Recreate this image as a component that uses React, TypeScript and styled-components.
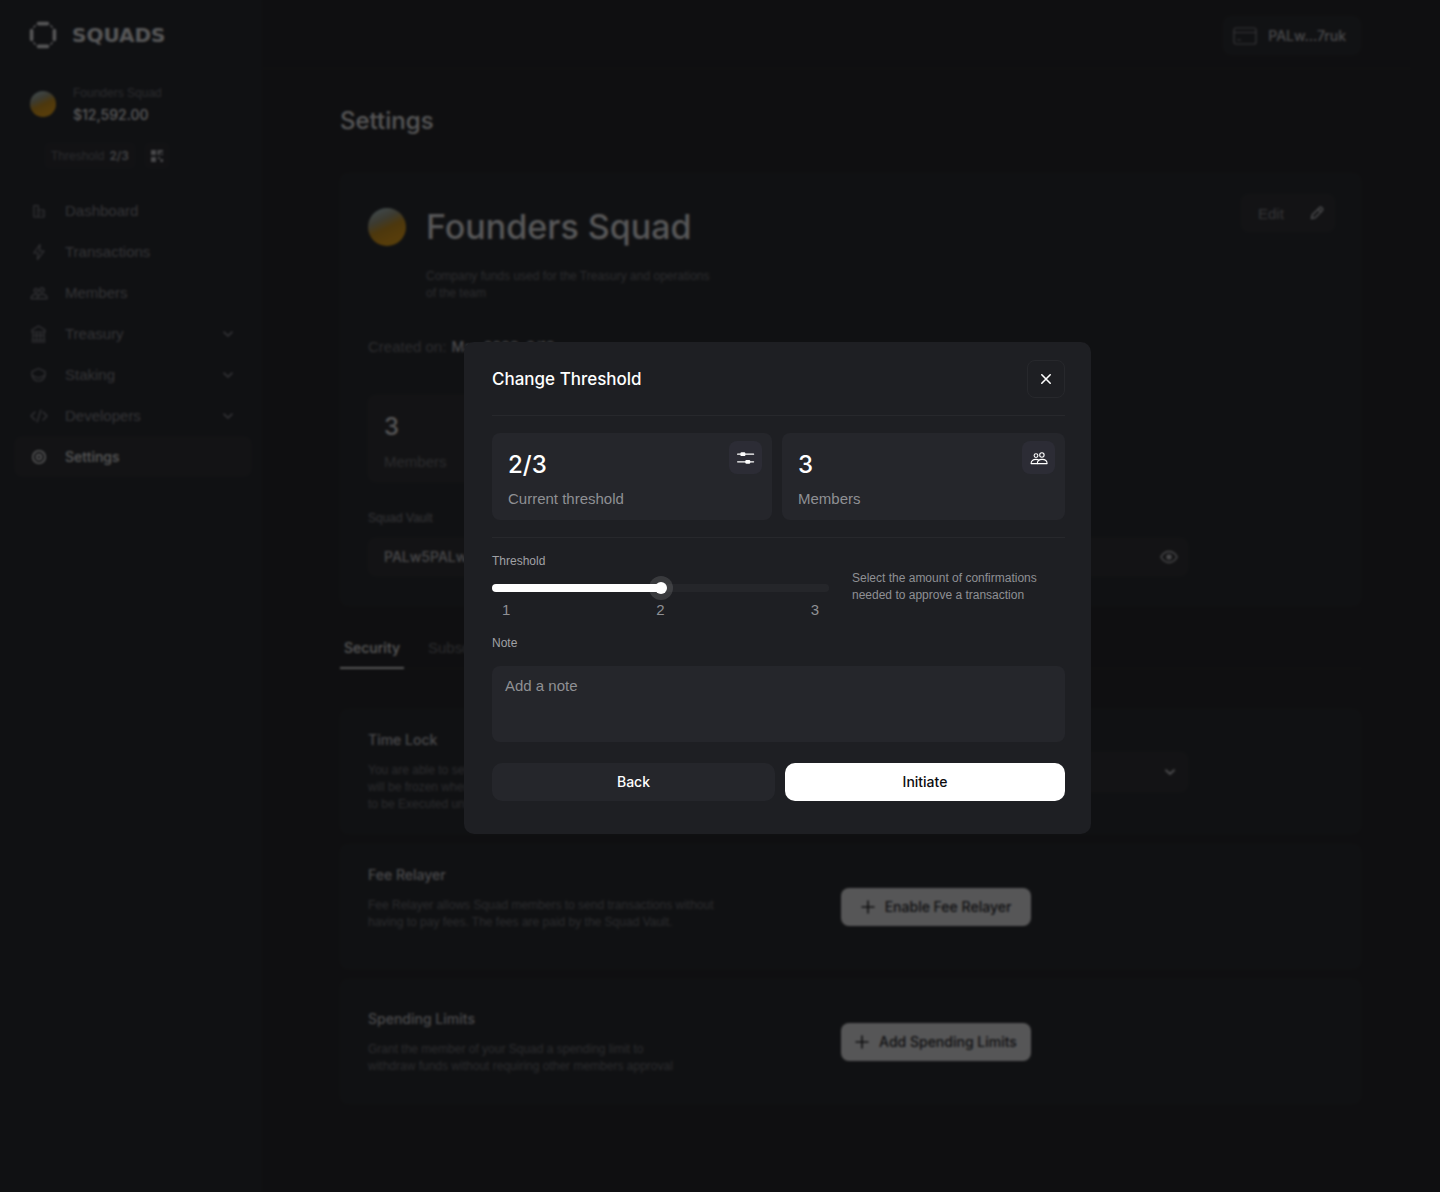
import React, { useState } from "react";
import styled, { createGlobalStyle, css } from "styled-components";

const color = {
  page: "#131315",
  sidebar: "#15181c",
  card: "#171a1d",
  field: "#212123",
  line: "#18191b",
  text: "#ffffff",
  soft: "#d0d0d4",
  nav: "#8c8c92",
  faint: "#6e6f74",
  modal: "#1e1f23",
  modalCard: "#25262b",
  modalLine: "#27282c",
  modalText: "#8f9094",
};

const medium = css`
  font-family: Inter, "Liberation Sans", Arial, sans-serif;
  font-weight: 500;
`;

const Global = createGlobalStyle`
  *, *::before, *::after { box-sizing: border-box; }
  body { margin: 0; background: ${color.page}; }
  body, button, input, textarea, select {
    font-family: "Liberation Sans", Arial, Helvetica, sans-serif;
  }
  h1, h2, h3, p, ul, dl, dd { margin: 0; padding: 0; font-weight: 400; }
  button { border: 0; padding: 0; cursor: pointer; }
  svg { display: block; flex: none; }
`;

/* ---------- Shell ---------- */

const Shell = styled.div`
  display: grid;
  grid-template-columns: 262px minmax(0, 1fr);
  min-height: 100vh;
  color: ${color.text};
  font-size: 15px;
  line-height: 20px;
`;

const Sidebar = styled.aside`
  background: ${color.sidebar};
  padding: 21px 10px 0 14px;
`;

const Brand = styled.a`
  display: flex;
  align-items: center;
  gap: 15px;
  height: 28px;
  padding-left: 15px;
  color: ${color.text};
  text-decoration: none;
  font: 700 20px/28px "DejaVu Sans", Verdana, sans-serif;
`;

const Account = styled.div`
  display: flex;
  align-items: center;
  gap: 17px;
  margin-top: 33px;
  padding-left: 16px;
`;

const Avatar = styled.span<{ $size: number }>`
  flex: none;
  width: ${(p) => p.$size}px;
  height: ${(p) => p.$size}px;
  border-radius: 50%;
  background: linear-gradient(155deg, #b4d4dc 8%, #a8a480 32%, #e09a08 52%, #ffa800 75%, #ffb400 100%);
`;

const AccountName = styled.p`
  font-size: 12px;
  line-height: 22px;
  color: ${color.faint};
`;

const Balance = styled.p`
  ${medium}
  font-size: 14px;
  line-height: 22px;
`;

const Tags = styled.div`
  display: flex;
  gap: 8px;
  margin-top: 16px;
  padding-left: 30px;
`;

const Tag = styled.span`
  display: flex;
  align-items: center;
  gap: 5px;
  height: 27px;
  padding: 0 7px;
  border-radius: 6px;
  background: #1b1c20;
  color: ${color.faint};
  font-size: 12px;
  b { ${medium} color: ${color.soft}; font-size: 12px; }
`;

const TagButton = styled.button`
  display: grid;
  place-items: center;
  width: 26px;
  height: 27px;
  border-radius: 6px;
  background: #1b1c20;
  color: ${color.soft};
`;

const NavList = styled.ul`
  list-style: none;
  margin-top: 21px;
`;

const NavLink = styled.a<{ $active?: boolean }>`
  display: flex;
  align-items: center;
  gap: 17px;
  height: 41px;
  padding: 0 18px 0 16px;
  border-radius: 8px;
  color: ${color.nav};
  text-decoration: none;
  span { flex: 1; }
  ${(p) => p.$active && css`
    ${medium}
    font-size: 14px;
    background: #1e1f22;
    color: ${color.text};
  `}
`;

/* ---------- Main column ---------- */

const TopBar = styled.header`
  display: flex;
  justify-content: flex-end;
  align-items: flex-start;
  height: 69px;
  margin-right: 30px;
  padding: 16px 49px 0 0;
  border-bottom: 1px solid ${color.line};
`;

const Wallet = styled.button`
  ${medium}
  display: flex;
  align-items: center;
  gap: 11px;
  height: 39px;
  padding: 0 15px 0 10px;
  border-radius: 8px;
  background: #1a1c1f;
  color: ${color.nav};
  font-size: 14px;
  span { color: ${color.soft}; }
`;

const Content = styled.main`
  padding: 36px 79px 88px 78px;
`;

const PageTitle = styled.h1`
  ${medium}
  font-size: 24px;
  line-height: 32px;
`;

const Profile = styled.section`
  margin-top: 36px;
  padding: 21px 26px 30px 28px;
  border-radius: 8px;
  background: ${color.card};
`;

const ProfileTop = styled.div`
  display: flex;
  align-items: flex-start;
  justify-content: space-between;
`;

const Identity = styled.div`
  display: grid;
  grid-template-columns: 38px auto;
  column-gap: 20px;
  row-gap: 18px;
  align-items: center;
  padding-top: 10px;
`;

const SquadName = styled.h2`
  ${medium}
  font-size: 34px;
  line-height: 46px;
`;

const Muted = styled.p<{ $lines?: number }>`
  font-size: 12px;
  line-height: 17px;
  min-height: ${(p) => (p.$lines ?? 1) * 17}px;
  color: ${color.faint};
`;

const SquadAbout = styled(Muted)`
  grid-column: 2;
`;

const EditButton = styled.button`
  display: flex;
  align-items: center;
  justify-content: space-between;
  width: 94px;
  height: 38px;
  padding: 0 10px 0 17px;
  border-radius: 8px;
  background: #1f2023;
  color: ${color.nav};
  font-size: 15px;
  svg { color: ${color.soft}; }
`;

const Created = styled.p`
  display: flex;
  gap: 5px;
  margin-top: 35px;
  color: ${color.faint};
  b { ${medium} color: ${color.soft}; font-size: 14px; }
`;

const ProfileStat = styled.dl`
  display: flex;
  flex-direction: column-reverse;
  justify-content: flex-end;
  gap: 9px;
  max-width: 404px;
  height: 87px;
  margin-top: 38px;
  padding: 16px;
  border-radius: 8px;
  background: ${color.field};
  dt { color: ${color.faint}; line-height: 20px; }
  dd { ${medium} font-size: 24px; line-height: 32px; }
`;

const VaultLabel = styled.p`
  margin-top: 27px;
  font-size: 12px;
  line-height: 18px;
  color: ${color.nav};
`;

const VaultRow = styled.div`
  ${medium}
  display: flex;
  align-items: center;
  justify-content: space-between;
  max-width: 820px;
  height: 38px;
  margin-top: 11px;
  padding: 0 10px 0 16px;
  border-radius: 8px;
  background: ${color.field};
  color: ${color.soft};
  font-size: 14px;
`;

const IconButton = styled.button`
  background: none;
  color: inherit;
`;

const Tabs = styled.div`
  display: flex;
  gap: 20px;
  margin-top: 32px;
  border-bottom: 1px solid ${color.line};
`;

const Tab = styled.button<{ $active?: boolean }>`
  height: 31px;
  padding: 0 4px 10px;
  margin-bottom: -1px;
  background: none;
  font-size: 15px;
  line-height: 20px;
  color: ${color.faint};
  border-bottom: 2px solid transparent;
  ${(p) => p.$active && css`
    ${medium}
    font-size: 14px;
    color: ${color.text};
    border-color: ${color.text};
  `}
`;

const Policies = styled.div`
  display: grid;
  gap: 10px;
  margin-top: 40px;
`;

const Policy = styled.section`
  display: grid;
  grid-template-columns: minmax(0, 473px) minmax(0, 347px);
  align-items: center;
  min-height: 125px;
  padding: 0 28px;
  border-radius: 8px;
  background: ${color.card};
`;

const PolicyTitle = styled.h3`
  ${medium}
  margin-bottom: 12px;
  font-size: 14px;
  line-height: 20px;
  color: ${color.soft};
`;

const LightButton = styled.button`
  ${medium}
  display: flex;
  align-items: center;
  justify-content: center;
  gap: 10px;
  width: 190px;
  height: 38px;
  border-radius: 8px;
  background: #ffffff;
  color: #111113;
  font-size: 14px;
`;

const SelectWrap = styled.label`
  display: flex;
  align-items: center;
  height: 40px;
  padding-right: 12px;
  border-radius: 8px;
  background: ${color.field};
  color: ${color.soft};
`;

const Select = styled.select`
  flex: 1;
  appearance: none;
  height: 100%;
  padding-left: 16px;
  border: 0;
  background: transparent;
  color: inherit;
  font-size: 15px;
`;

/* ---------- Dialog ---------- */

const Overlay = styled.div`
  position: fixed;
  inset: 0;
  display: flex;
  align-items: center;
  justify-content: center;
  padding: 0 0 16px 115px;
  background: rgba(14, 14, 15, 0.7);
  backdrop-filter: blur(1px);
`;

const Dialog = styled.div`
  width: 627px;
  padding: 18px 26px 33px 28px;
  border-radius: 10px;
  background: ${color.modal};
  color: ${color.text};
  font-size: 15px;
  line-height: 20px;
`;

const DialogHead = styled.div`
  display: flex;
  align-items: center;
  justify-content: space-between;
`;

const DialogTitle = styled.h2`
  ${medium}
  font-size: 17px;
  line-height: 24px;
`;

const CloseButton = styled.button`
  display: grid;
  place-items: center;
  width: 38px;
  height: 38px;
  border: 1px solid ${color.modalLine};
  border-radius: 8px;
  background: transparent;
  color: ${color.text};
`;

const Divider = styled.hr`
  height: 1px;
  margin: 17px 0;
  border: 0;
  background: ${color.modalLine};
`;

const Stats = styled.div`
  display: grid;
  grid-template-columns: 280fr 283fr;
  gap: 10px;
`;

const Stat = styled.div`
  display: flex;
  align-items: flex-start;
  justify-content: space-between;
  height: 87px;
  padding: 8px 10px 0 16px;
  border-radius: 8px;
  background: ${color.modalCard};
`;

const StatText = styled.dl`
  display: flex;
  flex-direction: column-reverse;
  gap: 8px;
  padding-top: 8px;
  dt { color: ${color.modalText}; }
  dd { ${medium} font-size: 24px; line-height: 32px; }
`;

const StatIcon = styled.span`
  display: grid;
  place-items: center;
  width: 33px;
  height: 33px;
  border-radius: 8px;
  background: #2c2c35;
`;

const ThresholdRow = styled.div`
  display: grid;
  grid-template-columns: 337px 1fr;
  column-gap: 23px;
  margin-top: -2px;
`;

const FieldLabel = styled.label`
  display: block;
  font-size: 12px;
  line-height: 16px;
  color: #a0a1a5;
`;

const Slider = styled.input`
  display: block;
  appearance: none;
  width: 100%;
  height: 24px;
  margin: 7px 0 0;
  background: transparent;
  outline: none;
  &::-webkit-slider-runnable-track {
    height: 8px;
    border-radius: 4px;
    background: linear-gradient(to right, #ffffff var(--fill), #25262a var(--fill));
  }
  &::-webkit-slider-thumb {
    appearance: none;
    width: 12px;
    height: 12px;
    margin-top: -2px;
    border-radius: 50%;
    background: #ffffff;
    box-shadow: 0 0 0 6px rgba(255, 255, 255, 0.12);
  }
`;

const Ticks = styled.div`
  display: flex;
  justify-content: space-between;
  padding: 0 10px;
  color: ${color.modalText};
`;

const Hint = styled.p`
  padding-top: 17px;
  font-size: 12px;
  line-height: 17px;
  color: ${color.modalText};
`;

const NoteLabel = styled(FieldLabel)`
  margin-top: 15px;
`;

const Note = styled.textarea`
  display: block;
  width: 100%;
  height: 76px;
  margin-top: 15px;
  padding: 10px 13px;
  border: 0;
  border-radius: 8px;
  resize: none;
  outline: none;
  background: ${color.modalCard};
  color: ${color.text};
  font-size: 15px;
  line-height: 20px;
  &::placeholder { color: ${color.modalText}; }
`;

const Actions = styled.div`
  display: grid;
  grid-template-columns: 283fr 280fr;
  gap: 10px;
  margin-top: 21px;
`;

const ActionButton = styled.button<{ $primary?: boolean }>`
  ${medium}
  height: 38px;
  padding-bottom: 2px;
  border-radius: 10px;
  font-size: 14px;
  background: ${(p) => (p.$primary ? "#ffffff" : color.modalCard)};
  color: ${(p) => (p.$primary ? "#0c0c0e" : "#ffffff")};
`;

/* ---------- Icons ---------- */

type IconProps = { w: number; h?: number; sw?: number; children: React.ReactNode };

const Icon = ({ w, h = w, sw = 1.2, children }: IconProps) => (
  <svg
    width={w}
    height={h}
    viewBox={`0 0 ${w} ${h}`}
    fill="none"
    stroke="currentColor"
    strokeWidth={sw}
    strokeLinecap="round"
    strokeLinejoin="round"
    aria-hidden="true"
  >
    {children}
  </svg>
);

const LogoIcon = () => (
  <Icon w={28} sw={3.6}>
    <path d="M9.500 2.600h9M9.500 25.400h9M2.600 9.500v9M25.400 9.500v9" />
    <path d="M4.500 6.500l2-2M21.500 4.500l2 2M4.500 21.500l2 2M21.500 23.500l2-2" strokeWidth={1.2} />
  </Icon>
);

const Chevron = ({ sw = 1.6 }: { sw?: number }) => (
  <Icon w={12} sw={sw}><path d="M2 4.200l4 3.800 4-3.800" /></Icon>
);

const PlusIcon = () => (
  <Icon w={14} sw={1.6}><path d="M7 1v12M1 7h12" /></Icon>
);

const PeopleShape = () => (
  <>
    <circle cx="6" cy="4.600" r="1.900" />
    <circle cx="11.900" cy="4" r="2.200" />
    <path d="M7.300 12.600c0-2.800 1.900-4.200 4.900-4.200s4.900 1.400 4.900 4.200z" />
    <path d="M8.600 9C7.800 8.500 7 8.400 6 8.400c-2.900 0-4.900 1.400-4.900 4.200h6.200" />
  </>
);

const NAV = [
  { name: "Dashboard", icon: <Icon w={18}><path d="M4 3.500h4.200v11.500H4zM8.200 8h5.800v7H8.200zM10.800 11.500h.8" /></Icon> },
  { name: "Transactions", icon: <Icon w={18}><path d="M10 1.500L3.800 10h4.400l-.8 6.500L14 8H9.500z" /></Icon> },
  { name: "Members", icon: <Icon w={18} h={14}><PeopleShape /></Icon> },
  { name: "Treasury", icon: <Icon w={18}><path d="M2 5L8.500 1 15 5v2H2zM3 7v8M14 7v8M6.600 7v8M10.400 7v8M4 10.500h9M2 15h13M2 17h13" /></Icon>, more: true },
  { name: "Staking", icon: <Icon w={18}><path d="M2 5.500L8.500 2.500l6.500 3v4L8.500 12 2 9.500zM2 8.500c0 4 3 6.500 6.500 6.500s6.500-2.500 6.500-6.500" /></Icon>, more: true },
  { name: "Developers", icon: <Icon w={18}><path d="M5 5L1 9l4 4M13 5l4 4-4 4M10.800 3L7.200 15" /></Icon>, more: true },
  { name: "Settings", icon: <Icon w={18} sw={1.6}><circle cx="9" cy="9" r="6.200" /><circle cx="9" cy="9" r="2.400" /></Icon>, active: true },
];

/* ---------- Page ---------- */

const SidebarPanel = () => (
  <Sidebar>
    <Brand href="#"><LogoIcon />SQUADS</Brand>
    <Account>
      <Avatar $size={26} />
      <div>
        <AccountName>Founders Squad</AccountName>
        <Balance>$12,592.00</Balance>
      </div>
    </Account>
    <Tags>
      <Tag>Threshold <b>2/3</b></Tag>
      <TagButton aria-label="Show code">
        <svg width="12" height="12" viewBox="0 0 12 12" fill="currentColor" aria-hidden="true">
          <path d="M0 0h5v5H0zM0 7h5v5H0zM6.500 0H12v2H9v3H6.500zM10 3.500h2V5h-2zM7 7h2v2H7zM9.500 9H12v3H9.500z" />
        </svg>
      </TagButton>
    </Tags>
    <nav>
      <NavList>
        {NAV.map((n) => (
          <li key={n.name}>
            <NavLink href="#" $active={n.active}>
              {n.icon}
              <span>{n.name}</span>
              {n.more && <Chevron />}
            </NavLink>
          </li>
        ))}
      </NavList>
    </nav>
  </Sidebar>
);

const ProfileCard = () => (
  <Profile>
    <ProfileTop>
      <Identity>
        <Avatar $size={38} />
        <SquadName>Founders Squad</SquadName>
        <SquadAbout>Company funds used for the Treasury and operations<br />of the team</SquadAbout>
      </Identity>
      <EditButton>
        Edit
        <Icon w={16} sw={1.6}><path d="M2.500 13.500l.8-3.600 7.200-7.200a1.500 1.500 0 012.100 0l.7.7a1.500 1.500 0 010 2.100l-7.200 7.200zM9 4.200L11.800 7" /></Icon>
      </EditButton>
    </ProfileTop>
    <Created>Created on: <b>May 2023, 2/12</b></Created>
    <ProfileStat><dt>Members</dt><dd>3</dd></ProfileStat>
    <VaultLabel>Squad Vault</VaultLabel>
    <VaultRow>
      PALw5PALw5
      <IconButton aria-label="Show address">
        <Icon w={18} sw={1.5}><path d="M1 9c2-3.600 4.800-5.400 8-5.400S15 5.400 17 9c-2 3.600-4.800 5.400-8 5.400S3 12.600 1 9z" /><circle cx="9" cy="9" r="2" fill="currentColor" /></Icon>
      </IconButton>
    </VaultRow>
  </Profile>
);

const PolicyList = () => (
  <Policies>
    <Policy>
      <div>
        <PolicyTitle>Time Lock</PolicyTitle>
        <Muted $lines={3}>
          You are able to set a Time Lock. Transactions<br />
          will be frozen when approved and not able<br />
          to be Executed until the time has passed
        </Muted>
      </div>
      <SelectWrap>
        <Select aria-label="Time lock"><option>None</option></Select>
        <Chevron sw={2} />
      </SelectWrap>
    </Policy>
    <Policy>
      <div>
        <PolicyTitle>Fee Relayer</PolicyTitle>
        <Muted $lines={3}>
          Fee Relayer allows Squad members to send transactions without<br />
          having to pay fees. The fees are paid by the Squad Vault.
        </Muted>
      </div>
      <LightButton><PlusIcon />Enable Fee Relayer</LightButton>
    </Policy>
    <Policy>
      <div>
        <PolicyTitle>Spending Limits</PolicyTitle>
        <Muted $lines={2}>
          Grant the member of your Squad a spending limit to<br />
          withdraw funds without requiring other members approval
        </Muted>
      </div>
      <LightButton><PlusIcon />Add Spending Limits</LightButton>
    </Policy>
  </Policies>
);

const ThresholdDialog = () => {
  const [value, setValue] = useState(2);
  const fill = { "--fill": `${((value - 1) / 2) * 100}%` } as React.CSSProperties;
  return (
    <Dialog role="dialog" aria-modal="true" aria-labelledby="dialog-title">
      <DialogHead>
        <DialogTitle id="dialog-title">Change Threshold</DialogTitle>
        <CloseButton aria-label="Close">
          <Icon w={12} sw={1.6}><path d="M1.800 1.800l8.400 8.400M10.200 1.800l-8.400 8.400" /></Icon>
        </CloseButton>
      </DialogHead>
      <Divider />
      <Stats>
        <Stat>
          <StatText><dt>Current threshold</dt><dd>2/3</dd></StatText>
          <StatIcon>
            <Icon w={18} h={14}>
              <path d="M.6 3.200h16M.6 10.800h16" />
              <rect x="4" y="1.900" width="3.800" height="2.600" rx=".6" fill="currentColor" />
              <rect x="8.900" y="9.500" width="3.800" height="2.600" rx=".6" fill="currentColor" />
            </Icon>
          </StatIcon>
        </Stat>
        <Stat>
          <StatText><dt>Members</dt><dd>3</dd></StatText>
          <StatIcon><Icon w={18} h={14} sw={1.1}><PeopleShape /></Icon></StatIcon>
        </Stat>
      </Stats>
      <Divider />
      <ThresholdRow>
        <div>
          <FieldLabel htmlFor="threshold">Threshold</FieldLabel>
          <Slider
            id="threshold"
            type="range"
            min={1}
            max={3}
            value={value}
            style={fill}
            onChange={(e) => setValue(Number(e.target.value))}
          />
          <Ticks><span>1</span><span>2</span><span>3</span></Ticks>
        </div>
        <Hint>Select the amount of confirmations<br />needed to approve a transaction</Hint>
      </ThresholdRow>
      <NoteLabel htmlFor="note">Note</NoteLabel>
      <Note id="note" placeholder="Add a note" />
      <Actions>
        <ActionButton>Back</ActionButton>
        <ActionButton $primary>Initiate</ActionButton>
      </Actions>
    </Dialog>
  );
};

export default function App() {
  return (
    <>
      <Global />
      <Shell>
        <SidebarPanel />
        <div>
          <TopBar>
            <Wallet>
              <Icon w={24} h={18}><rect x="1" y="1" width="22" height="16" rx="2" /><path d="M1 5.500h22M4.500 13h3" /></Icon>
              <span>PALw...7ruk</span>
            </Wallet>
          </TopBar>
          <Content>
            <PageTitle>Settings</PageTitle>
            <ProfileCard />
            <Tabs>
              <Tab $active>Security</Tab>
              <Tab>Subsquads</Tab>
            </Tabs>
            <PolicyList />
          </Content>
        </div>
      </Shell>
      <Overlay>
        <ThresholdDialog />
      </Overlay>
    </>
  );
}
